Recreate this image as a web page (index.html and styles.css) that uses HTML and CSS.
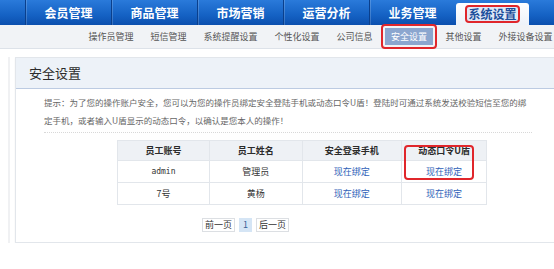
FILE: index.html
```html
<!DOCTYPE html>
<html>
<head>
    <meta charset="UTF-8">
    <title>安全设置</title>
    <link rel="stylesheet" href="styles.css">
</head>
<body>
    <div class="topnav">
        <a class="nav-item">会员管理</a>
        <a class="nav-item">商品管理</a>
        <a class="nav-item">市场营销</a>
        <a class="nav-item">运营分析</a>
        <a class="nav-item">业务管理</a>
        <a class="nav-item active"><span class="mark">系统设置</span></a>
    </div>

    <div class="subnav">
        <a>操作员管理</a><span class="sep"></span>
        <a>短信管理</a><span class="sep"></span>
        <a>系统提醒设置</a><span class="sep"></span>
        <a>个性化设置</a><span class="sep"></span>
        <a>公司信息</a>
        <a class="current"><span>安全设置</span></a>
        <a>其他设置</a><span class="sep"></span>
        <a>外接设备设置</a>
    </div>

    <div class="wrap">
        <div class="panel">
            <div class="panel-header">安全设置</div>
            <div class="panel-body">
                <p class="tip">提示：为了您的操作账户安全，您可以为您的操作员绑定安全登陆手机或动态口令U盾！登陆时可通过系统发送校验短信至您的绑定手机，或者输入U盾显示的动态口令，以确认是您本人的操作！</p>

                <div class="table-box">
                    <table class="grid">
                        <tr>
                            <th class="c1">员工账号</th>
                            <th class="c2">员工姓名</th>
                            <th class="c3">安全登录手机</th>
                            <th class="c4">动态口令U盾</th>
                        </tr>
                        <tr>
                            <td class="mono">admin</td>
                            <td>管理员</td>
                            <td><a>现在绑定</a></td>
                            <td><a>现在绑定</a></td>
                        </tr>
                        <tr>
                            <td>7号</td>
                            <td>黄杨</td>
                            <td><a>现在绑定</a></td>
                            <td><a>现在绑定</a></td>
                        </tr>
                    </table>
                    <div class="highlight"></div>
                </div>

                <div class="pager">
                    <a>前一页</a>
                    <a class="on">1</a>
                    <a>后一页</a>
                </div>
            </div>
        </div>
    </div>
</body>
</html>
```

FILE: styles.css
```css
:root {
    --text: #333333;
    --text-secondary: #666666;
    --link: #2f5fb8;
    --border: #e2e6eb;
    --mark: #e0262b;
}

body {
    margin: 0;
    background: #ffffff;
    font-family: "Noto Sans CJK SC", "Liberation Sans", sans-serif;
    color: var(--text);
    overflow: hidden;
}

a {
    cursor: pointer;
}

/* top navigation */
.topnav {
    display: flex;
    align-items: flex-end;
    height: 25px;
    padding-left: 25px;
    background: linear-gradient(#2a7ada, #1562c4 60%, #0b4fae);
}

.nav-item {
    width: 85px;
    height: 25px;
    display: flex;
    align-items: center;
    justify-content: center;
    color: #ffffff;
    font-size: 12px;
    font-weight: 700;
    border-left: 1px solid #0a3f8c;
    box-shadow: inset 1px 0 0 rgba(255, 255, 255, 0.18);
}

.nav-item.active {
    width: 73px;
    height: 22px;
    margin-left: 1px;
    border-left: none;
    box-shadow: none;
    border-radius: 3px 3px 0 0;
    background: linear-gradient(#ffffff, #edf2f9);
    color: #1d4f9c;
}

.nav-item .mark {
    padding: 0 1px;
    line-height: 14px;
    border: 2px solid var(--mark);
    border-radius: 4px;
    background: #dfe9f7;
}

/* second level navigation */
.subnav {
    display: flex;
    align-items: center;
    height: 23px;
    padding-left: 80px;
    background: #f1f3f6;
    border-bottom: 1px solid #dde2e9;
    font-size: 9px;
    color: #555555;
    white-space: nowrap;
}

.subnav a {
    padding: 0 8.5px;
}

.subnav .sep {
    width: 1px;
    height: 10px;
    background: #9aa3ad;
}

.subnav a.current {
    padding: 2px;
    border: 2px solid var(--mark);
    border-radius: 4px;
}

.subnav a.current span {
    display: block;
    padding: 2px 6px;
    background: #8ba6cf;
    color: #ffffff;
}

/* content panel */
.wrap {
    margin: 8px 0 0 8px;
    padding-left: 5px;
    border-left: 2px solid #f0f1f3;
}

.panel {
    border: 1px solid var(--border);
    border-right: none;
    box-shadow: 0 1px 2px rgba(0, 0, 0, 0.05);
}

.panel-header {
    height: 30px;
    line-height: 30px;
    padding-left: 13px;
    background: #edf2f8;
    border-bottom: 1px solid #bccbe2;
    font-size: 13px;
    color: #2b2b2b;
}

.panel-body {
    padding: 4px 0 10px 28px;
}

.tip {
    width: 488px;
    margin: 0;
    padding-bottom: 3px;
    font-size: 8.5px;
    line-height: 18px;
    color: var(--text-secondary);
    border-bottom: 1px dotted #d8d8d8;
}

.table-box {
    position: relative;
    width: 370px;
    margin: 7px 0 0 73px;
}

.grid {
    width: 370px;
    border-collapse: collapse;
    font-size: 9px;
    text-align: center;
}

.grid th,
.grid td {
    border: 1px solid var(--border);
    padding: 0;
}

.grid th {
    height: 19px;
    background: #eef1f5;
    color: #2b2b2b;
    font-weight: 700;
}

.grid td {
    height: 21px;
    color: var(--text);
}

.grid .c1 { width: 92px; }
.grid .c2 { width: 93px; }
.grid .c3 { width: 100px; }
.grid .c4 { width: 85px; }

.grid td a {
    color: var(--link);
}

.grid .mono {
    font-family: "DejaVu Sans Mono", monospace;
    font-size: 8px;
}

.highlight {
    position: absolute;
    left: 287px;
    top: 5px;
    width: 66px;
    height: 31px;
    border: 2px solid var(--mark);
    border-radius: 4px;
}

/* paging */
.pager {
    display: flex;
    gap: 4px;
    margin: 13px 0 0 158px;
    font-size: 9px;
}

.pager a {
    height: 12px;
    line-height: 12px;
    padding: 0 2px;
    border: 1px solid #dcdfe3;
    color: #333333;
}

.pager a.on {
    padding: 0 3px;
    background: #d5e5f5;
    border-color: #d5e5f5;
    color: #3a5f95;
}
```
